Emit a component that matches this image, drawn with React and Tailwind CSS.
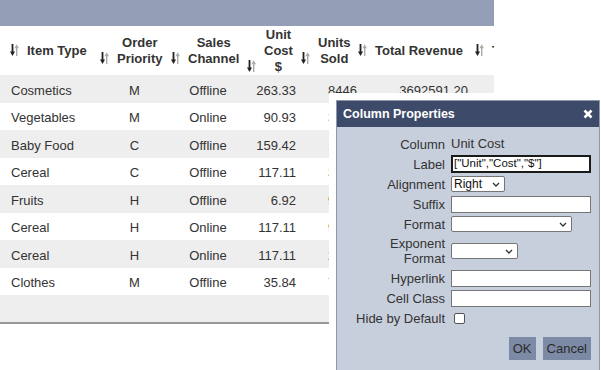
import React from 'react';

// revenue for rows below the first is covered by the dialog, so it is left out
const rows = [
  ['Cosmetics', 'M', 'Offline', '263.33', '8446', '3692591.20'],
  ['Vegetables', 'M', 'Online', '90.93', '3018', ''],
  ['Baby Food', 'C', 'Offline', '159.42', '1517', ''],
  ['Cereal', 'C', 'Offline', '117.11', '3322', ''],
  ['Fruits', 'H', 'Offline', '6.92', '9845', ''],
  ['Cereal', 'H', 'Online', '117.11', '9801', ''],
  ['Cereal', 'H', 'Online', '117.11', '2804', ''],
  ['Clothes', 'M', 'Offline', '35.84', '7234', ''],
];

function SortIcon() {
  return (
    <svg width="9" height="12" viewBox="0 0 9 12" className="mb-[3px] shrink-0">
      <rect x="1.6" y="0" width="1.8" height="9" fill="#222" />
      <polygon points="0,7.5 5,7.5 2.5,12" fill="#222" />
      <rect x="6" y="3" width="1.4" height="9" fill="#aaa" />
      <polygon points="4.4,4.2 9,4.2 6.7,0.2" fill="#aaa" />
    </svg>
  );
}

function Head({ children, className }) {
  return (
    <div className={`flex shrink-0 items-end gap-[8px] ${className}`}>
      <SortIcon />
      <div className="shrink-0 text-center leading-4">{children}</div>
    </div>
  );
}

function Chevron() {
  return (
    <svg width="8" height="5" viewBox="0 0 8 5" className="shrink-0">
      <path d="M1 1l3 3 3-3" fill="none" stroke="#333" strokeWidth="1.3" />
    </svg>
  );
}

function Row({ label, h = 'h-[18px]', children }) {
  return (
    <div className={`flex items-center ${h}`}>
      <div className="w-[108px] shrink-0 text-right leading-[15px]">{label}</div>
      <div className="ml-[6px] flex items-center">{children}</div>
    </div>
  );
}

function Input() {
  return <div className="h-[17px] w-[140px] border border-[#767676] bg-white" />;
}

function Select({ w, value }) {
  return (
    <div className={`flex h-[16px] items-center justify-between rounded-[2px] border border-[#767676] bg-white pl-[2px] pr-[4px] text-[12px] text-[#111] ${w}`}>
      <span>{value}</span>
      <Chevron />
    </div>
  );
}

export default function App() {
  return (
    <div className="relative h-[370px] w-[601px] overflow-hidden bg-white font-['Liberation_Sans',Arial,sans-serif] text-[13px] text-[#333]">
      <div className="w-[494px] overflow-hidden">
        <div className="h-[26px] bg-[#949fb7]" />
        <div className="flex h-[49px] items-center whitespace-nowrap pt-[1px] font-bold">
          <Head className="w-[94px] pl-[10px]">Item Type</Head>
          <Head className="w-[76px] pl-[6px]">Order<br />Priority</Head>
          <Head className="w-[76px] pl-[1px]">Sales<br />Channel</Head>
          <Head className="w-[54px] pl-[1px]">Unit<br />Cost<br />$</Head>
          <Head className="w-[57px] pl-[1px]">Units<br />Sold</Head>
          <Head className="w-[116px] pl-[1px]">Total Revenue</Head>
          <Head className="pl-[2px]">Total Profit</Head>
        </div>
        {rows.map((r, i) => (
          <div key={i} className={`flex h-[27.5px] items-center whitespace-nowrap pt-[3px] ${i % 2 === 0 ? 'bg-[#eeeeee]' : 'bg-white'}`}>
            <div className="w-[94px] shrink-0 pl-[11px]">{r[0]}</div>
            <div className="w-[76px] shrink-0 pl-[5px] text-center">{r[1]}</div>
            <div className="w-[76px] shrink-0 text-center">{r[2]}</div>
            <div className="w-[54px] shrink-0 pr-[4px] text-right">{r[3]}</div>
            <div className="w-[57px] shrink-0 text-right">{r[4]}</div>
            <div className="w-[115px] shrink-0 pr-[4px] text-right">{r[5]}</div>
          </div>
        ))}
        <div className="h-[29px] border-b-2 border-[#999] bg-[#eeeeee]" />
      </div>

      <div className="absolute left-[329px] top-[93px] w-[278px] border-[7px] border-white">
        <div className="h-[290px] border border-[#8e98ac] bg-[#c8cfdc]">
          <div className="flex h-[26px] items-center justify-between bg-[#3d4a69] pl-[6px] pr-[6px]">
            <span className="text-[12.5px] font-bold text-white">Column Properties</span>
            <svg width="10" height="10" viewBox="0 0 10 10">
              <path d="M1.5 1.5l7 7M8.5 1.5l-7 7" stroke="#fff" strokeWidth="2.6" />
            </svg>
          </div>
          <div className="flex flex-col gap-[2px] pt-[8px]">
            <Row label="Column">
              <span>Unit Cost</span>
            </Row>
            <Row label="Label">
              <div className="flex h-[18px] w-[140px] items-center border-2 border-[#1a1a1a] bg-white pl-[1px] text-[11.5px] text-[#111]">
                ["Unit","Cost","$"]
              </div>
            </Row>
            <Row label="Alignment">
              <Select w="w-[54px]" value="Right" />
            </Row>
            <Row label="Suffix">
              <Input />
            </Row>
            <Row label="Format">
              <Select w="w-[121px]" value="" />
            </Row>
            <Row label={<>Exponent<br />Format</>} h="h-[32px]">
              <Select w="w-[67px]" value="" />
            </Row>
            <Row label="Hyperlink">
              <Input />
            </Row>
            <Row label="Cell Class">
              <Input />
            </Row>
            <Row label="Hide by Default">
              <div className="ml-[3px] h-[11px] w-[11px] rounded-[2px] border border-[#555] bg-white" />
            </Row>
          </div>
          <div className="mt-[10px] flex justify-end gap-[7px] pr-[8px]">
            <button className="h-[23px] bg-[#7d8aa6] px-[4px] text-[13px] text-[#2a2a2a]">OK</button>
            <button className="h-[23px] bg-[#7d8aa6] px-[4px] text-[13px] text-[#2a2a2a]">Cancel</button>
          </div>
        </div>
      </div>
    </div>
  );
}
